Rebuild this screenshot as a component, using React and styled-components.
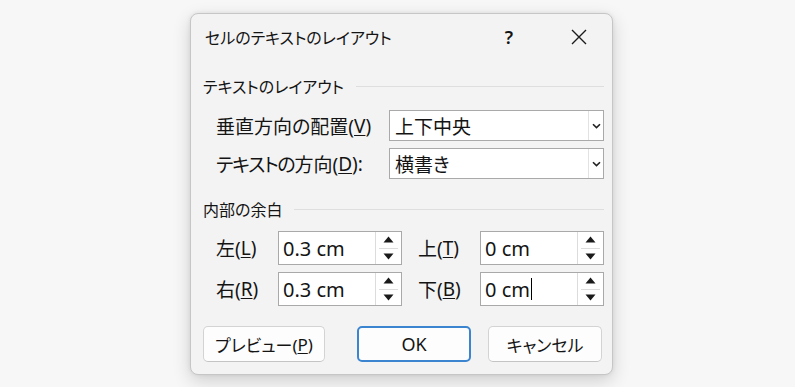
import React from 'react';
import styled, { createGlobalStyle } from 'styled-components';

const GlobalStyle = createGlobalStyle`
  html, body {
    margin: 0;
    padding: 0;
    background: #f7f7f7;
  }
  * {
    box-sizing: border-box;
  }
`;

const Page = styled.div`
  width: 795px;
  height: 387px;
  padding: 13px 0 0 190px;
  background: #f7f7f7;
  font-family: "Noto Sans", "Noto Sans CJK JP", sans-serif;
  font-feature-settings: "palt";
  color: #141414;
`;

const Dialog = styled.div`
  width: 423px;
  height: 362px;
  background: #f3f3f3;
  border: 1px solid #c6c6c6;
  border-radius: 8px;
  box-shadow: 0 6px 18px rgba(0, 0, 0, 0.16), 0 0 4px rgba(0, 0, 0, 0.08);
  display: flex;
  flex-direction: column;
`;

const TitleBar = styled.div`
  height: 46px;
  display: flex;
  align-items: center;
  padding: 0 10px 0 14px;
`;

const Title = styled.div`
  flex: 1;
  font-size: 16px;
`;

const TitleButton = styled.div`
  width: 46px;
  height: 32px;
  display: flex;
  align-items: center;
  justify-content: center;
  font-family: "Noto Sans", sans-serif;
  font-size: 18px;
  font-weight: 600;
  margin-left: ${({ $gap }) => $gap || 0}px;
`;

const Body = styled.div`
  padding: 15px 8px 0 12px;
  display: flex;
  flex-direction: column;
`;

const GroupHeader = styled.div`
  height: 22px;
  display: flex;
  align-items: center;
  gap: 12px;
  font-size: 16px;
  margin-top: ${({ $top }) => $top || 0}px;

  &::after {
    content: "";
    flex: 1;
    height: 1px;
    background: #dedede;
  }
`;

const SelectGrid = styled.div`
  display: grid;
  grid-template-columns: 173px 1fr;
  grid-auto-rows: 31px;
  row-gap: 7px;
  padding-left: 13px;
  margin-top: 13px;
`;

const Label = styled.div`
  display: flex;
  align-items: center;
  font-size: 19px;
  padding-left: ${({ $indent }) => $indent || 0}px;
  white-space: nowrap;

  u {
    text-underline-offset: 2px;
    text-decoration-thickness: 1px;
  }
`;

const Kana = styled.span`
  letter-spacing: -1.2px;
`;

const Select = styled.div`
  display: flex;
  align-items: stretch;
  background: #ffffff;
  border: 1px solid #a9a9a9;
`;

const SelectValue = styled.div`
  flex: 1;
  display: flex;
  align-items: center;
  padding-left: 5px;
  font-size: 19px;
`;

const SelectButton = styled.div`
  width: 15px;
  border-left: 1px solid #e2e2e2;
  display: flex;
  align-items: center;
  justify-content: center;
`;

const SpinGrid = styled.div`
  display: grid;
  grid-template-columns: 62px 124px 78px 1fr;
  grid-auto-rows: 34px;
  row-gap: 7px;
  padding-left: 13px;
  margin-top: 11px;
`;

const Spin = styled.div`
  display: flex;
  align-items: stretch;
  background: #ffffff;
  border: 1px solid #a9a9a9;
`;

const SpinValue = styled.div`
  flex: 1;
  display: flex;
  align-items: center;
  padding-left: 4px;
  font-size: 20px;
`;

const Caret = styled.span`
  display: inline-block;
  width: 1.5px;
  height: 22px;
  background: #000;
  margin-left: 1px;
`;

const SpinButtons = styled.div`
  width: 26px;
  border-left: 1px solid #dcdcdc;
  display: flex;
  flex-direction: column;
`;

const SpinHalf = styled.div`
  flex: 1;
  display: flex;
  align-items: center;
  justify-content: center;
  border-top: ${({ $lower }) => ($lower ? '1px solid #dcdcdc' : 'none')};
  margin: 0 3px;
`;

const ButtonRow = styled.div`
  display: flex;
  margin-top: 20px;
`;

const Button = styled.div`
  width: ${({ $w }) => $w}px;
  height: 36px;
  margin-left: ${({ $ml }) => $ml || 0}px;
  display: flex;
  align-items: center;
  justify-content: center;
  background: #fdfdfd;
  border: ${({ $primary }) => ($primary ? '2px solid #3b85d0' : '1px solid #d3d3d3')};
  border-bottom-color: ${({ $primary }) => ($primary ? '#3b85d0' : '#c4c4c4')};
  border-radius: 5px;
  font-size: ${({ $primary }) => ($primary ? 18 : 17)}px;

  u {
    text-underline-offset: 2px;
    text-decoration-thickness: 1px;
  }
`;

const Chevron = () => (
  <svg width="9" height="6" viewBox="0 0 9 6">
    <path d="M1 1.2 L4.5 4.6 L8 1.2" fill="none" stroke="#222" strokeWidth="1.6" />
  </svg>
);

const CloseIcon = () => (
  <svg width="16" height="16" viewBox="0 0 16 16">
    <path d="M1 1 L15 15 M15 1 L1 15" stroke="#1b1b1b" strokeWidth="1.4" fill="none" />
  </svg>
);

const Tri = ({ down }) => (
  <svg width="11" height="7" viewBox="0 0 11 7">
    <path d={down ? 'M0.5 0.5 H10.5 L5.5 6.5 Z' : 'M0.5 6.5 H10.5 L5.5 0.5 Z'} fill="#1a1a1a" />
  </svg>
);

const SpinBox = ({ value, caret }) => (
  <Spin>
    <SpinValue>
      {value}
      {caret && <Caret />}
    </SpinValue>
    <SpinButtons>
      <SpinHalf><Tri /></SpinHalf>
      <SpinHalf $lower><Tri down /></SpinHalf>
    </SpinButtons>
  </Spin>
);

const SelectBox = ({ value }) => (
  <Select>
    <SelectValue>{value}</SelectValue>
    <SelectButton><Chevron /></SelectButton>
  </Select>
);

export default function App() {
  return (
    <Page>
      <GlobalStyle />
      <Dialog>
        <TitleBar>
          <Title>セルのテキストのレイアウト</Title>
          <TitleButton>?</TitleButton>
          <TitleButton $gap={24}><CloseIcon /></TitleButton>
        </TitleBar>
        <Body>
          <GroupHeader>テキストのレイアウト</GroupHeader>
          <SelectGrid>
            <Label>垂直方向の配置(<u>V</u>)</Label>
            <SelectBox value="上下中央" />
            <Label><Kana>テキストの</Kana>方向(<u>D</u>):</Label>
            <SelectBox value="横書き" />
          </SelectGrid>

          <GroupHeader $top={19}>内部の余白</GroupHeader>
          <SpinGrid>
            <Label>左(<u>L</u>)</Label>
            <SpinBox value="0.3 cm" />
            <Label $indent={16}>上(<u>T</u>)</Label>
            <SpinBox value="0 cm" />
            <Label>右(<u>R</u>)</Label>
            <SpinBox value="0.3 cm" />
            <Label $indent={16}>下(<u>B</u>)</Label>
            <SpinBox value="0 cm" caret />
          </SpinGrid>

          <ButtonRow>
            <Button $w={122}>プレビュー(<u>P</u>)</Button>
            <Button $w={114} $ml={32} $primary>OK</Button>
            <Button $w={114} $ml={17}>キャンセル</Button>
          </ButtonRow>
        </Body>
      </Dialog>
    </Page>
  );
}
